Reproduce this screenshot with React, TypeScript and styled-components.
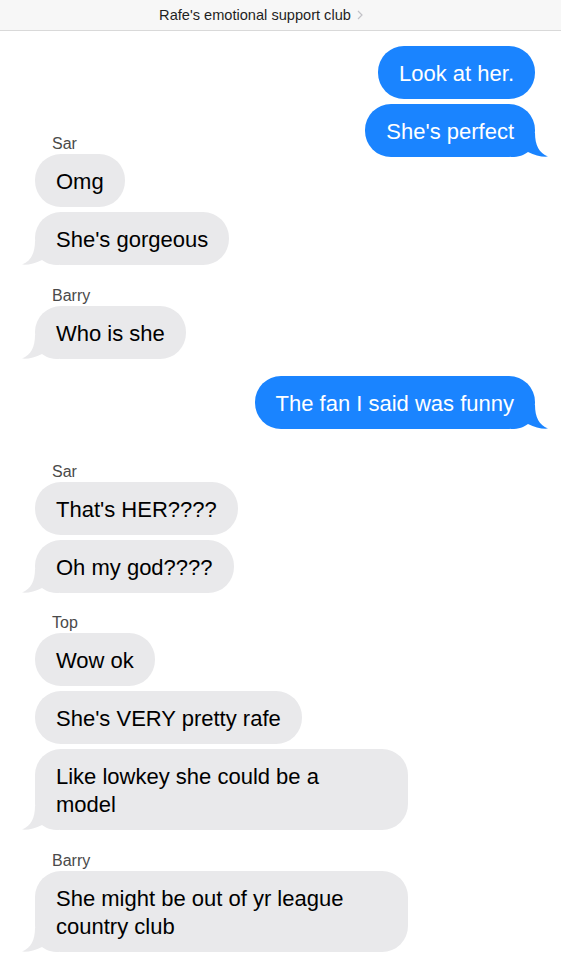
import React from "react";
import styled, { createGlobalStyle } from "styled-components";

const Global = createGlobalStyle`
  html, body { margin: 0; padding: 0; background: #ffffff; }
  body { font-family: "Liberation Sans", Arial, sans-serif; }
`;

const Page = styled.div`
  width: 561px;
  min-height: 960px;
  display: flex;
  flex-direction: column;
`;

const Header = styled.header`
  height: 30px;
  box-sizing: content-box;
  border-bottom: 1px solid #d9d9d9;
  background: #f7f7f7;
  display: flex;
  align-items: center;
  justify-content: center;
  gap: 6px;
  padding-right: 39px;
`;

const Title = styled.span`
  font: 14.6px/18px "Liberation Sans", Arial, sans-serif;
  color: #1f1f1f;
`;

const Thread = styled.main`
  display: flex;
  flex-direction: column;
  padding: 0 26px 0 35px;
`;

const Group = styled.section<{ $mt: number; $me?: boolean }>`
  margin-top: ${(p) => p.$mt}px;
  display: flex;
  flex-direction: column;
  align-items: ${(p) => (p.$me ? "flex-end" : "flex-start")};
`;

const Sender = styled.div`
  font: 16px/20px "Liberation Sans", Arial, sans-serif;
  color: #4a4a4a;
  padding-left: 17px;
`;

const Stack = styled.div<{ $me?: boolean }>`
  display: flex;
  flex-direction: column;
  gap: 5px;
  align-items: ${(p) => (p.$me ? "flex-end" : "flex-start")};
`;

const Bubble = styled.div<{ $me?: boolean; $wide?: boolean }>`
  position: relative;
  isolation: isolate;
  max-width: 373px;
  box-sizing: border-box;
  padding: 14px ${(p) => (p.$wide ? 44 : 21)}px 11px 21px;
  ${(p) => (p.$wide ? "width: 373px;" : "")}
  border-radius: 26px;
  background: ${(p) => (p.$me ? "#1a84ff" : "#e9e9eb")};
  color: ${(p) => (p.$me ? "#ffffff" : "#000000")};
  font: 22px/28px "Liberation Sans", Arial, sans-serif;
`;

const TailSvg = styled.svg<{ $me?: boolean }>`
  position: absolute;
  bottom: 0;
  z-index: -1;
  width: 37px;
  height: 24px;
  ${(p) => (p.$me ? "right: -13px;" : "left: -13px; transform: scaleX(-1);")}
`;

const Tail = ({ me }: { me?: boolean }) => (
  <TailSvg $me={me} viewBox="0 0 37 24" aria-hidden>
    <path
      d="M0 0 L24 0 C24 12 28 20 37 23.6 C31 24.2 24 22.5 17 19 C13 22 8 24 0 24 Z"
      fill={me ? "#1a84ff" : "#e9e9eb"}
    />
  </TailSvg>
);

type M = { text: string; wide?: boolean };
type G = { me?: boolean; sender?: string; mt: number; msgs: M[] };

const groups: G[] = [
  { me: true, mt: 15, msgs: [{ text: "Look at her." }, { text: "She's perfect" }] },
  { sender: "Sar", mt: -23, msgs: [{ text: "Omg" }, { text: "She's gorgeous" }] },
  { sender: "Barry", mt: 21, msgs: [{ text: "Who is she" }] },
  { me: true, mt: 17, msgs: [{ text: "The fan I said was funny" }] },
  { sender: "Sar", mt: 33, msgs: [{ text: "That's HER????" }, { text: "Oh my god????" }] },
  {
    sender: "Top",
    mt: 20,
    msgs: [
      { text: "Wow ok" },
      { text: "She's VERY pretty rafe" },
      { text: "Like lowkey she could be a model", wide: true },
    ],
  },
  {
    sender: "Barry",
    mt: 21,
    msgs: [{ text: "She might be out of yr league country club", wide: true }],
  },
];

export default function App() {
  return (
    <Page>
      <Global />
      <Header>
        <Title>Rafe's emotional support club</Title>
        <svg width="6" height="10" viewBox="0 0 6 10" aria-hidden>
          <path d="M1 1 L5 5 L1 9" fill="none" stroke="#c2c2c7" strokeWidth="1.2" />
        </svg>
      </Header>
      <Thread>
        {groups.map((g, gi) => (
          <Group key={gi} $mt={g.mt} $me={g.me}>
            {g.sender && <Sender>{g.sender}</Sender>}
            <Stack $me={g.me}>
              {g.msgs.map((m, mi) => (
                <Bubble key={mi} $me={g.me} $wide={m.wide}>
                  {m.text}
                  {mi === g.msgs.length - 1 && <Tail me={g.me} />}
                </Bubble>
              ))}
            </Stack>
          </Group>
        ))}
      </Thread>
    </Page>
  );
}
